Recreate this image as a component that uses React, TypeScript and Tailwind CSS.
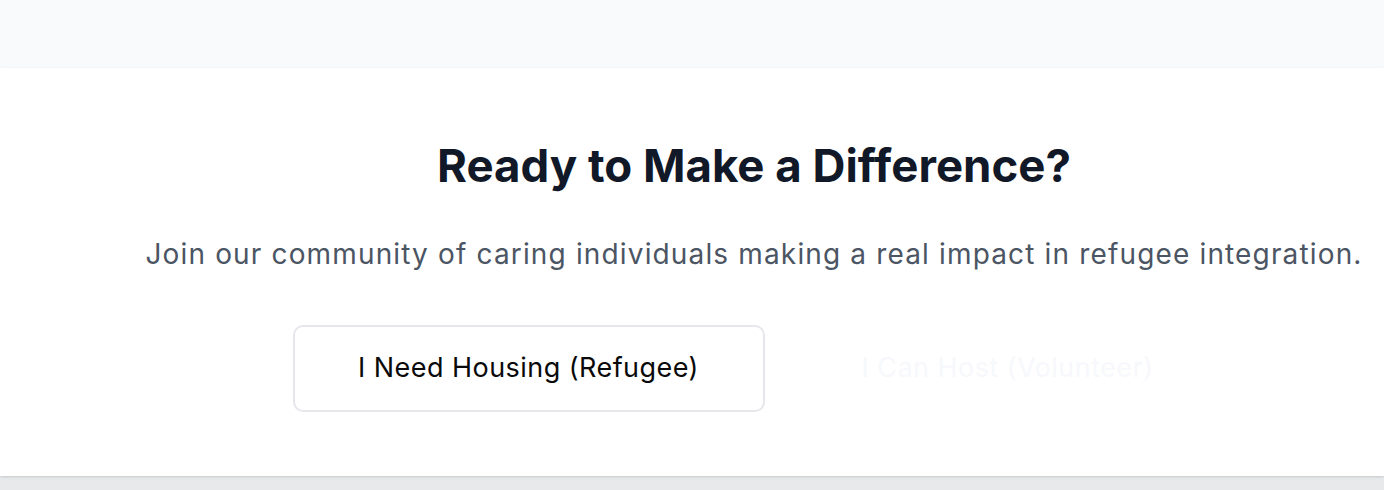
export default function App() {
  return (
    <div className="h-[490px] w-[1384px] overflow-hidden bg-gradient-to-b from-[#d6d7d6] to-[#e8e9ea] font-['Inter',_sans-serif]">
      <div className="h-[68px] bg-[#f9fafb]" />
      <section className="flex h-[408px] flex-col items-center bg-white pl-[124px] shadow-sm">
        <h2 className="mt-[70px] whitespace-nowrap text-[45.6px] font-bold leading-[56px] text-[#111827]">
          Ready to Make a Difference?
        </h2>
        <p className="mt-[42px] whitespace-nowrap text-[28px] leading-[36px] tracking-[1.15px] text-[#4b5563]">
          Join our community of caring individuals making a real impact in refugee integration.
        </p>
        <div className="mt-[53px] flex gap-[35px]">
          <button className="flex h-[87px] w-[472px] items-center justify-center rounded-[10px] border-2 border-[#e5e7eb] bg-white text-[27px] tracking-[0.45px] text-[#0a0a0a]">
            I Need Housing (Refugee)
          </button>
          <button className="flex h-[87px] w-[416px] items-center justify-center rounded-[10px] text-[27px] tracking-[0.45px] text-[#f7f8fc]">
            I Can Host (Volunteer)
          </button>
        </div>
      </section>
    </div>
  );
}
